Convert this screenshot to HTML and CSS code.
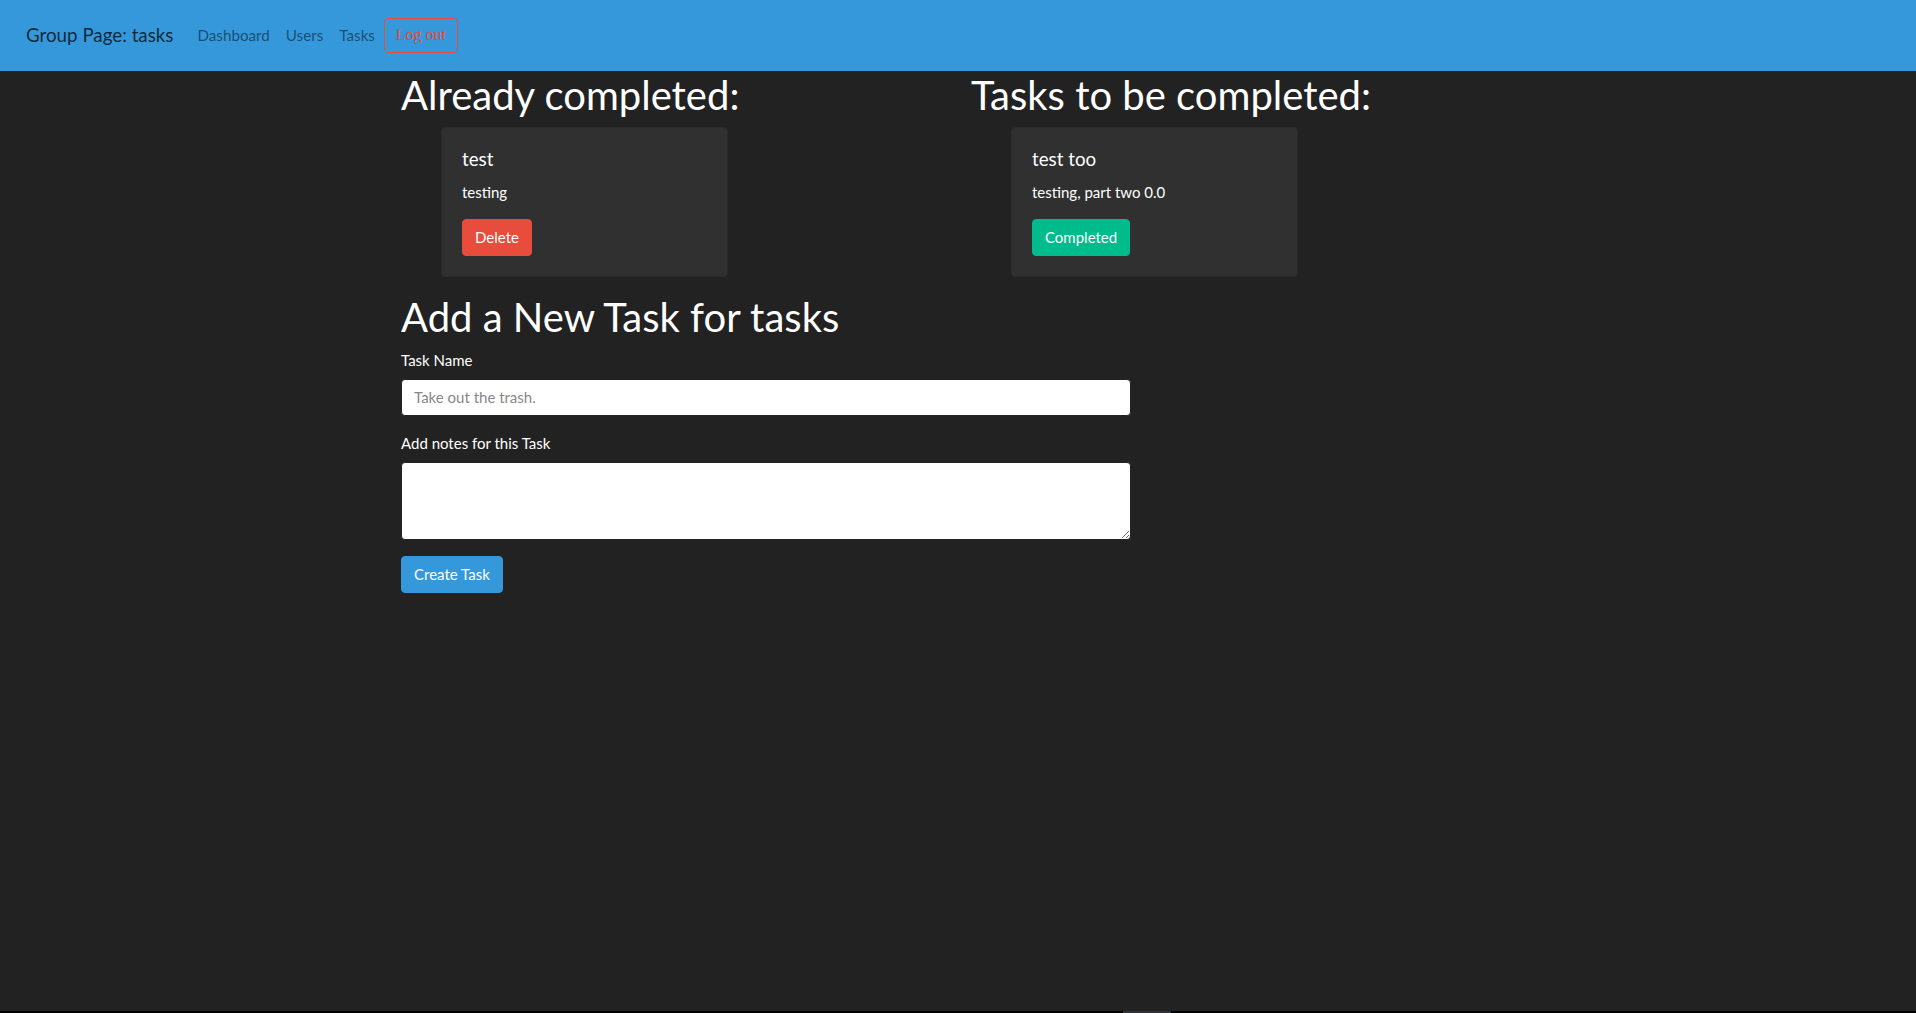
FILE: index.html
```html
<!DOCTYPE html>
<html lang="en">
<head>
<meta charset="utf-8">
<title>Group Page: tasks</title>
<link rel="stylesheet" href="styles.css">
</head>
<body>
<nav class="navbar">
  <a class="brand" href="#">Group Page: tasks</a>
  <ul class="nav">
    <li><a class="nav-link" href="#">Dashboard</a></li>
    <li><a class="nav-link" href="#">Users</a></li>
    <li><a class="nav-link" href="#">Tasks</a></li>
    <li><button class="logout" type="button">Log out</button></li>
  </ul>
</nav>
<main class="container">
  <div class="row">
    <section class="col">
      <h2 class="heading">Already completed:</h2>
      <ul class="card-list">
        <li class="card">
          <h5 class="card-title">test</h5>
          <p class="card-text">testing</p>
          <button class="btn btn-danger" type="button">Delete</button>
        </li>
      </ul>
    </section>
    <section class="col">
      <h2 class="heading">Tasks to be completed:</h2>
      <ul class="card-list">
        <li class="card">
          <h5 class="card-title">test too</h5>
          <p class="card-text">testing, part two 0.0</p>
          <button class="btn btn-success" type="button">Completed</button>
        </li>
      </ul>
    </section>
  </div>
  <h2 class="heading">Add a New Task for tasks</h2>
  <form class="task-form">
    <div class="form-group">
      <label class="label" for="name">Task Name</label>
      <input class="form-control" id="name" type="text" placeholder="Take out the trash.">
    </div>
    <div class="form-group">
      <label class="label" for="notes">Add notes for this Task</label>
      <textarea class="form-control textarea" id="notes"></textarea>
    </div>
    <button class="btn btn-info" type="button">Create Task</button>
  </form>
</main>
<div class="bottom-edge"><span class="bottom-thumb"></span></div>
</body>
</html>
```

FILE: styles.css
```css
* { box-sizing: border-box; }

html, body {
  margin: 0;
  padding: 0;
}

body {
  background: #222222;
  color: #ffffff;
  font-family: "Lato", "Liberation Sans", sans-serif;
  font-size: 15px;
  line-height: 1.5;
  min-height: 1013px;
}

.navbar {
  display: flex;
  align-items: center;
  background: #3498db;
  padding: 16px 16px 16px 26px;
  height: 70.5px;
}

.brand {
  font-size: 18.75px;
  line-height: 1.4;
  color: rgba(0, 0, 0, 0.75);
  text-decoration: none;
  margin-right: 16px;
  padding: 6px 0;
}

.nav {
  display: flex;
  align-items: center;
  list-style: none;
  margin: 0;
  padding: 0;
}

.nav-link {
  display: block;
  padding: 8px;
  font-size: 15.2px;
  color: rgba(0, 0, 0, 0.5);
  text-decoration: none;
}

.logout {
  display: block;
  width: 74px;
  height: 35px;
  padding: 0;
  margin-left: 1px;
  background: transparent;
  border: 1px solid #e74c3c;
  border-radius: 4px;
  color: #e74c3c;
  font-family: "Liberation Serif", "Times New Roman", serif;
  font-size: 16px;
  text-align: center;
}

.container {
  width: 1140px;
  margin: 0 auto;
  padding: 0 17px 0 13px;
}

.row {
  display: flex;
  margin: 0 -17px 0 -13px;
}

.col {
  flex: 0 0 50%;
  padding: 0 17px 0 13px;
}

.heading {
  font-size: 40px;
  font-weight: 400;
  line-height: 1.2;
  margin: 0 0 8px;
}

.card-list {
  list-style: none;
  margin: 0 0 16px;
  padding: 0 0 0 40px;
}

.card {
  width: 287px;
  background: #303030;
  border: 1px solid rgba(0, 0, 0, 0.125);
  border-radius: 4px;
  padding: 20px;
}

.card-title {
  font-size: 18.75px;
  font-weight: 400;
  line-height: 1.2;
  margin: 0 0 10.5px;
}

.card-text {
  margin: 0 0 16px;
}

.btn {
  display: inline-block;
  font-family: inherit;
  font-size: 15px;
  line-height: 1.5;
  padding: 6px 12px;
  border: 1px solid transparent;
  border-radius: 4px;
  color: #ffffff;
  cursor: pointer;
}

.btn-danger { background: #e74c3c; border-color: #e74c3c; }
.btn-success { background: #00bc8c; border-color: #00bc8c; }
.btn-info { background: #3498db; border-color: #3498db; }

.task-form {
  width: 730px;
}

.form-group {
  margin-bottom: 16px;
}

.label {
  display: block;
  margin-bottom: 8px;
}

.form-control {
  display: block;
  width: 100%;
  height: 36.5px;
  padding: 6px 12px;
  font-family: inherit;
  font-size: 15px;
  line-height: 1.5;
  color: #444444;
  background: #ffffff;
  border: 1px solid #222222;
  border-radius: 4px;
  margin: 0;
}

.form-control::placeholder {
  color: #888888;
}

.textarea {
  height: 78px;
  resize: vertical;
}

.bottom-edge {
  position: fixed;
  left: 0;
  right: 0;
  bottom: 0;
  height: 2px;
  background: #000000;
}

.bottom-thumb {
  position: absolute;
  left: 1123px;
  width: 48px;
  top: 0;
  bottom: 0;
  background: #2b3238;
}
```
